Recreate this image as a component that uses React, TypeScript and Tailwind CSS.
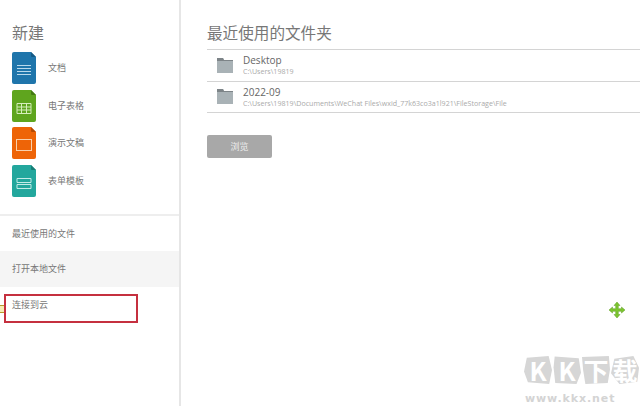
const cjk = "font-['Noto_Sans_CJK_SC','Noto_Sans',sans-serif]";

function DocIcon({ color, fold, children }: { color: string; fold: string; children: React.ReactNode }) {
  return (
    <svg width="24" height="32" viewBox="0 0 24 32" className="shrink-0">
      <path d="M2 0H19L24 5V30a2 2 0 0 1-2 2H2a2 2 0 0 1-2-2V2a2 2 0 0 1 2-2Z" fill={color} />
      <path d="M19 0L24 5H20a1 1 0 0 1-1-1Z" fill={fold} />
      {children}
    </svg>
  );
}

const newItems = [
  {
    label: '文档',
    color: '#1f75ab',
    fold: '#155a85',
    glyph: <path d="M5 13.5H19M5 16.5H19M5 19.5H19M5 22.5H19" stroke="#b9d9ec" strokeWidth="1" fill="none" />,
  },
  {
    label: '电子表格',
    color: '#5fa51e',
    fold: '#437a12',
    glyph: <path d="M5 13.5H19V23.5H5ZM5 17H19M5 20H19M9.5 13.5V23.5M14.5 13.5V23.5" stroke="#d6eebc" strokeWidth="1" fill="none" />,
  },
  {
    label: '演示文稿',
    color: '#ee6407',
    fold: '#b34a04',
    glyph: <rect x="4.5" y="12.5" width="15" height="11" stroke="#f9cfa9" strokeWidth="1" fill="none" />,
  },
  {
    label: '表单模板',
    color: '#23a79d',
    fold: '#187d75',
    glyph: <path d="M5 13.5H19V17.5H5ZM5 19.5H19V23.5H5Z" stroke="#c2ebe7" strokeWidth="1" fill="none" />,
  },
];

const recent = [
  { name: 'Desktop', path: 'C:\\Users\\19819' },
  { name: '2022-09', path: 'C:\\Users\\19819\\Documents\\WeChat Files\\wxid_77k63co3a1l921\\FileStorage\\File' },
];

const marks = [
  { c: 'K', shape: '[clip-path:polygon(10%_6%,88%_0,100%_50%,90%_100%,14%_94%,0_55%)]' },
  { c: 'K', shape: '[clip-path:polygon(6%_2%,92%_8%,100%_60%,84%_100%,8%_96%,2%_40%)]' },
  { c: '下', shape: '[clip-path:polygon(0_4%,96%_0,100%_48%,92%_96%,12%_100%,4%_50%)]' },
  { c: '载', shape: '[clip-path:polygon(12%_10%,80%_0,100%_42%,94%_92%,30%_100%,0_62%)]' },
];

function FolderIcon() {
  return (
    <svg width="16" height="15" viewBox="0 0 16 15" className="shrink-0">
      <path d="M0 0H6L7 2H16V15H0Z" fill="#a9b2b6" />
      <path d="M0 0H6L7 2H16V3H0Z" fill="#7d8488" />
    </svg>
  );
}

export default function App() {
  return (
    <div className={`relative flex h-[406px] w-[640px] overflow-hidden bg-white ${cjk}`}>
      <aside className="flex w-[181px] shrink-0 flex-col border-r-2 border-[#e6e6e6]">
        <h2 className="pl-3 pt-[20px] text-[16px] leading-[24px] text-[#777]">新建</h2>
        <ul className="flex flex-col gap-[5.6px] pt-2">
          {newItems.map((item) => (
            <li key={item.label} className="flex items-center gap-3 pl-3">
              <DocIcon color={item.color} fold={item.fold}>{item.glyph}</DocIcon>
              <span className="text-[9px] text-[#777]">{item.label}</span>
            </li>
          ))}
        </ul>
        <nav className="mt-[17px] flex flex-col border-t-2 border-[#eeeeee] text-[9px] text-[#777]">
          <div className="flex h-[35px] items-center pl-3">最近使用的文件</div>
          <div className="flex h-[36px] items-center bg-[#f5f5f5] pl-3">打开本地文件</div>
          <div className="flex h-[36px] items-center pl-3">连接到云</div>
        </nav>
      </aside>

      <main className="flex-1 pl-[26px] pt-[20px]">
        <h1 className="text-[15.6px] leading-[24px] text-[#777]">最近使用的文件夹</h1>
        <div className="mt-[5px] border-t border-[#d4d4d4]">
          {recent.map((r) => (
            <div key={r.name} className="flex h-[31.5px] items-center border-b border-[#d4d4d4] pl-[10px]">
              <FolderIcon />
              <div className="flex flex-col pl-[10px] font-['Open_Sans',sans-serif]">
                <span className="text-[10px] leading-[12px] text-[#666]">{r.name}</span>
                <span className="text-[7.1px] leading-[10px] text-[#aaa]">{r.path}</span>
              </div>
            </div>
          ))}
        </div>
        <button className="mt-[22px] flex h-[23px] w-[65px] items-center justify-center rounded-[2px] bg-[#a8a8a8] text-[9px] text-[#eee]">
          浏览
        </button>
      </main>

      {/* annotation and cursor on top of the shot */}
      <div className="absolute left-[4px] top-[294px] h-[29px] w-[134px] border-2 border-[#c5303f]" />
      <div className="absolute left-0 top-[305px] h-[8px] w-[4px] border-y border-[#b89b2c] bg-[#f5edb5]" />
      <svg className="absolute left-[608px] top-[301px]" width="18" height="18" viewBox="0 0 18 18">
        <path
          d="M9 1L12 4.5H10.3V7.7H13.5V6L17 9L13.5 12V10.3H10.3V13.5H12L9 17L6 13.5H7.7V10.3H4.5V12L1 9L4.5 6V7.7H7.7V4.5H6Z"
          fill="#7cc62f"
          stroke="#5d9a20"
          strokeWidth="0.5"
        />
      </svg>

      {/* watermark */}
      <div className="absolute left-[524px] top-[356px] flex flex-col items-start text-[#d4d4d4]">
        <div className="flex items-center gap-[1px]">
          {marks.map((m, i) => (
            <span
              key={i}
              className={`flex h-[28px] w-[28px] items-center justify-center bg-[#d6d6d6] text-[25px] font-bold leading-none text-white ${m.shape}`}
            >
              {m.c}
            </span>
          ))}
        </div>
        <span className="mt-[8px] ml-[1px] font-['DejaVu_Sans',sans-serif] text-[11px] font-bold leading-[13px] tracking-[0.9px]">
          www.kkx.net
        </span>
      </div>
    </div>
  );
}
